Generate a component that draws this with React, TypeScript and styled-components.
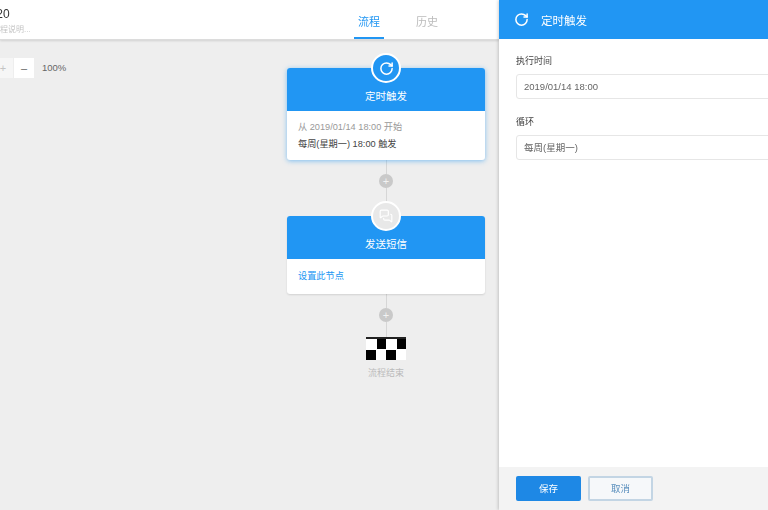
import * as React from "react";
import styled, { createGlobalStyle } from "styled-components";
import { MessagesSquare, RotateCw } from "lucide-react";

const BLUE = "#2196f3";

const GlobalStyle = createGlobalStyle`
  html, body {
    margin: 0;
    padding: 0;
    width: 768px;
    height: 510px;
    overflow: hidden;
    background: #eeeeee;
    font-family: "Liberation Sans", "Noto Sans CJK SC", sans-serif;
  }
  #root {
    filter: blur(0.6px);
  }
`;

const Page = styled.div`
  display: flex;
  width: 768px;
  height: 510px;
  overflow: hidden;
`;

const Main = styled.div`
  flex: 0 0 499px;
  display: flex;
  flex-direction: column;
  min-width: 0;
`;

const Header = styled.header`
  flex: 0 0 40px;
  box-sizing: border-box;
  display: flex;
  justify-content: space-between;
  background: #fff;
  border-bottom: 1px solid #dcdcdc;
  box-shadow: 0 1px 2px rgba(0, 0, 0, 0.12);
  position: relative;
  z-index: 1;
`;

const TitleBlock = styled.div`
  margin-left: -17px;
  padding-top: 7px;
`;

const Title = styled.div`
  font-size: 12px;
  line-height: 14px;
  color: #333;
`;

const Subtitle = styled.div`
  margin: 3px 0 0 -7px;
  font-size: 8px;
  line-height: 12px;
  color: #c4c4c4;
`;

const Tabs = styled.nav`
  display: flex;
  gap: 28px;
  margin-right: 57px;
`;

const Tab = styled.div<{ $active?: boolean }>`
  width: 30px;
  height: 39px;
  box-sizing: border-box;
  padding-top: 15px;
  text-align: center;
  font-size: 11px;
  line-height: 14px;
  color: ${(p) => (p.$active ? BLUE : "#bbbbbb")};
  border-bottom: 2px solid ${(p) => (p.$active ? BLUE : "transparent")};
`;

const Canvas = styled.main`
  flex: 1;
  position: relative;
  padding: 28px 0 0 287px;
  background: #eeeeee;
`;

const Zoom = styled.div`
  position: absolute;
  left: -7px;
  top: 18px;
  display: flex;
  align-items: center;
  gap: 1px;
`;

const ZoomButton = styled.div<{ $faded?: boolean }>`
  width: 20px;
  height: 20px;
  background: ${(p) => (p.$faded ? "#f6f6f6" : "#fff")};
  color: ${(p) => (p.$faded ? "#c4c4c4" : "#666")};
  font-size: 11px;
  line-height: 20px;
  text-align: center;
`;

const ZoomValue = styled.span`
  margin-left: 7px;
  font-size: 9.5px;
  line-height: 18px;
  color: #666;
`;

const Flow = styled.div`
  width: 198px;
  display: flex;
  flex-direction: column;
  align-items: center;
`;

const Card = styled.section<{ $selected?: boolean }>`
  position: relative;
  width: 100%;
  background: #fff;
  border-radius: 3px;
  box-shadow: ${(p) =>
    p.$selected
      ? "0 1px 5px rgba(33, 150, 243, 0.55)"
      : "0 1px 2px rgba(0, 0, 0, 0.12)"};
`;

const CardHead = styled.div`
  height: 43px;
  box-sizing: border-box;
  padding-top: 21px;
  background: ${BLUE};
  border-radius: 3px 3px 0 0;
  color: #fff;
  font-size: 10.5px;
  line-height: 14px;
  text-align: center;
`;

const Badge = styled.div<{ $muted?: boolean }>`
  position: absolute;
  left: 50%;
  top: -15px;
  width: 30px;
  height: 30px;
  margin-left: -15px;
  box-sizing: border-box;
  display: flex;
  align-items: center;
  justify-content: center;
  border-radius: 50%;
  border: 2.5px solid #fff;
  background: ${(p) => (p.$muted ? "#e8e8e8" : BLUE)};
  color: #fff;
`;

const CardBody = styled.div<{ $height: number; $top: number }>`
  height: ${(p) => p.$height}px;
  box-sizing: border-box;
  padding: ${(p) => p.$top}px 11px 0;
`;

const BodyLine = styled.div<{ $tone: "muted" | "dark" | "link" }>`
  font-size: 9.2px;
  line-height: 17px;
  white-space: nowrap;
  color: ${(p) =>
    p.$tone === "muted" ? "#999" : p.$tone === "dark" ? "#444" : BLUE};
`;

const Connector = styled.div<{ $height: number }>`
  height: ${(p) => p.$height}px;
  display: flex;
  flex-direction: column;
  align-items: center;
`;

const Line = styled.div<{ $grow?: boolean }>`
  width: 1px;
  background: #d6d6d6;
  ${(p) => (p.$grow ? "flex: 1;" : "height: 14px;")}
`;

const AddDot = styled.div`
  width: 14px;
  height: 14px;
  box-sizing: border-box;
  display: flex;
  align-items: center;
  justify-content: center;
  border-radius: 50%;
  background: #c9c9c9;
  color: #f2f2f2;
  font-size: 11px;
  line-height: 14px;
`;

const EndLabel = styled.div`
  margin-top: 6px;
  font-size: 9px;
  line-height: 14px;
  color: #bbbbbb;
`;

const Panel = styled.aside`
  flex: 1;
  display: flex;
  flex-direction: column;
  background: #fff;
  box-shadow: -1px 0 3px rgba(0, 0, 0, 0.18);
  position: relative;
  z-index: 2;
`;

const PanelHead = styled.div`
  flex: 0 0 39px;
  display: flex;
  align-items: center;
  gap: 12px;
  padding-left: 15px;
  background: ${BLUE};
  color: #fff;
  font-size: 11.5px;
`;

const PanelBody = styled.div`
  flex: 1;
  padding: 16px 0 0 17px;
`;

const Field = styled.div`
  margin-bottom: 17px;
`;

const FieldLabel = styled.div`
  font-size: 9px;
  line-height: 13px;
  color: #444;
  margin-bottom: 6px;
`;

const Input = styled.div`
  width: 270px;
  height: 25px;
  box-sizing: border-box;
  padding-left: 7px;
  border: 1px solid #e6e6e6;
  border-radius: 3px;
  font-size: 9.5px;
  line-height: 24px;
  color: #666;
`;

const PanelFoot = styled.div`
  flex: 0 0 43px;
  box-sizing: border-box;
  display: flex;
  gap: 7px;
  padding: 9px 0 0 17px;
  background: #f3f3f3;
`;

const Button = styled.div<{ $primary?: boolean }>`
  width: 65px;
  height: 25px;
  box-sizing: border-box;
  border-radius: 2px;
  text-align: center;
  font-size: 9.5px;
  line-height: ${(p) => (p.$primary ? 25 : 21)}px;
  color: ${(p) => (p.$primary ? "#fff" : "#5a8fbd")};
  background: ${(p) => (p.$primary ? "#1e88e5" : "#f6f8fa")};
  border: ${(p) => (p.$primary ? "none" : "2px solid #c3d5e4")};
`;

const ChequeredFlag = () => (
  <svg width="40" height="23" viewBox="0 0 40 23" style={{ display: "block" }}>
    <rect x="0" y="2" width="40" height="21" fill="#fff" />
    <rect x="0" y="0" width="40" height="2" fill="#222" />
    <rect x="11" y="2" width="9" height="10" fill="#000" />
    <rect x="31" y="2" width="9" height="10" fill="#000" />
    <rect x="0" y="13" width="10" height="10" fill="#000" />
    <rect x="20" y="13" width="10" height="10" fill="#000" />
  </svg>
);

export default function App() {
  return (
    <Page>
      <GlobalStyle />
      <Main>
        <Header>
          <TitleBlock>
            <Title>2020</Title>
            <Subtitle>添加流程说明...</Subtitle>
          </TitleBlock>
          <Tabs>
            <Tab $active>流程</Tab>
            <Tab>历史</Tab>
          </Tabs>
        </Header>
        <Canvas>
          <Zoom>
            <ZoomButton $faded>+</ZoomButton>
            <ZoomButton>–</ZoomButton>
            <ZoomValue>100%</ZoomValue>
          </Zoom>
          <Flow>
            <Card $selected>
              <Badge>
                <RotateCw size={15} strokeWidth={2.4} />
              </Badge>
              <CardHead>定时触发</CardHead>
              <CardBody $height={49} $top={8}>
                <BodyLine $tone="muted">从 2019/01/14 18:00 开始</BodyLine>
                <BodyLine $tone="dark">每周(星期一) 18:00 触发</BodyLine>
              </CardBody>
            </Card>
            <Connector $height={56}>
              <Line />
              <AddDot>+</AddDot>
              <Line $grow />
            </Connector>
            <Card>
              <Badge $muted>
                <MessagesSquare size={14} strokeWidth={2} />
              </Badge>
              <CardHead>发送短信</CardHead>
              <CardBody $height={35} $top={9}>
                <BodyLine $tone="link">设置此节点</BodyLine>
              </CardBody>
            </Card>
            <Connector $height={43}>
              <Line />
              <AddDot>+</AddDot>
              <Line $grow />
            </Connector>
            <ChequeredFlag />
            <EndLabel>流程结束</EndLabel>
          </Flow>
        </Canvas>
      </Main>
      <Panel>
        <PanelHead>
          <RotateCw size={15} strokeWidth={2.4} />
          定时触发
        </PanelHead>
        <PanelBody>
          <Field>
            <FieldLabel>执行时间</FieldLabel>
            <Input>2019/01/14 18:00</Input>
          </Field>
          <Field>
            <FieldLabel>循环</FieldLabel>
            <Input>每周(星期一)</Input>
          </Field>
        </PanelBody>
        <PanelFoot>
          <Button $primary>保存</Button>
          <Button>取消</Button>
        </PanelFoot>
      </Panel>
    </Page>
  );
}
